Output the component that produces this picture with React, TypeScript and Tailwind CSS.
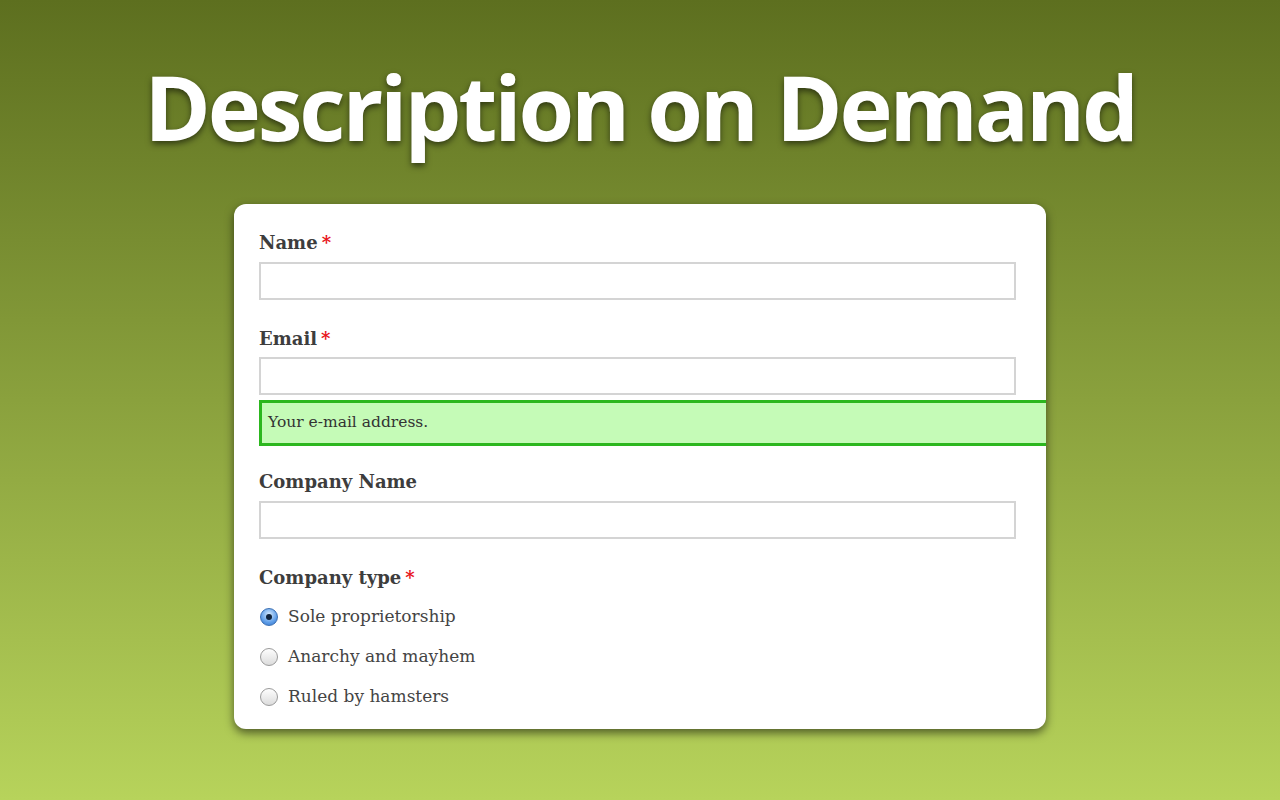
import React from 'react'

const serif = 'font-["DejaVu_Serif","Liberation_Serif",serif]'

function Label({ children, required }: { children: React.ReactNode; required?: boolean }) {
  return (
    <div className={`h-6 leading-6 text-[18px] font-bold text-[#3d3d3d] ${serif}`}>
      {children}
      {required && <span className="ml-1 text-[#e8141b]">*</span>}
    </div>
  )
}

function Input() {
  return <div className="h-[38px] w-full border-2 border-[#d4d4d4] bg-white" />
}

function Radio({ checked, label }: { checked?: boolean; label: string }) {
  return (
    <div className="flex h-10 items-center">
      <span
        className={`ml-px flex h-[18px] w-[18px] items-center justify-center rounded-full border ${
          checked
            ? 'border-[#3a6fb3] bg-[radial-gradient(circle_at_50%_35%,#d8ecff,#5f9ee8_60%,#2f70c9)]'
            : 'border-[#9a9a9a] bg-[linear-gradient(#fdfdfd,#dcdcdc)]'
        }`}
      >
        {checked && <span className="h-[6px] w-[6px] rounded-full bg-[#10243d]" />}
      </span>
      <span className={`ml-[10px] text-[17px] text-[#444] ${serif}`}>{label}</span>
    </div>
  )
}

export default function App() {
  return (
    <div className="h-[800px] w-full overflow-hidden bg-[linear-gradient(#5d6f1f,#b7d35b)]">
      <h1 className="pt-[61px] text-center text-[90px] leading-[90px] font-bold tracking-[-0.035em] text-white font-['Open_Sans',sans-serif] [text-shadow:0_3px_6px_rgba(0,0,0,0.55)]">
        Description on Demand
      </h1>

      <div className="mx-auto mt-[53px] w-[812px] overflow-hidden rounded-[12px] bg-white pt-[27px] pr-[30px] pb-3 pl-[25px] shadow-[0_4px_10px_rgba(0,0,0,0.55)]">
        <Label required>Name</Label>
        <div className="mt-[7px]">
          <Input />
        </div>

        <div className="mt-[27px]">
          <Label required>Email</Label>
        </div>
        <div className="mt-[6px]">
          <Input />
        </div>
        <div className="mt-[5px] mr-[-60px] flex h-[46px] items-center border-[3px] border-[#2cb71e] bg-[#c5fbb7] pl-[6px]">
          <span className={`text-[15.5px] text-[#333] ${serif}`}>Your e-mail address.</span>
        </div>

        <div className="mt-6">
          <Label>Company Name</Label>
        </div>
        <div className="mt-[7px]">
          <Input />
        </div>

        <div className="mt-[27px]">
          <Label required>Company type</Label>
        </div>
        <div className="mt-[7px]">
          <Radio checked label="Sole proprietorship" />
          <Radio label="Anarchy and mayhem" />
          <Radio label="Ruled by hamsters" />
        </div>
      </div>
    </div>
  )
}
